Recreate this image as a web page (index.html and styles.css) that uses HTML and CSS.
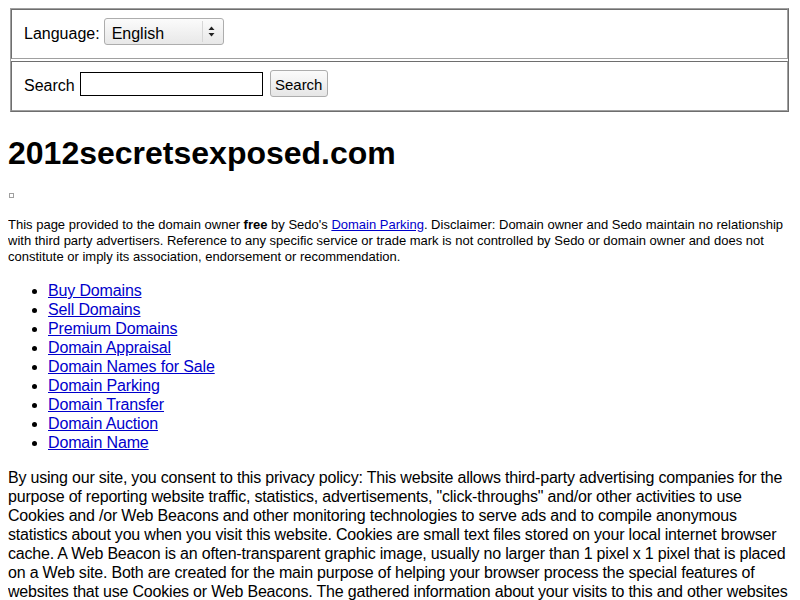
FILE: index.html
```html
<!DOCTYPE html>
<html>
<head>
    <link rel="stylesheet" href="styles.css">
</head>
<body>
    <div class="bar">
        <div class="bar-row">
            <label for="lang" class="lang-label">Language:</label>
            <span class="select-wrap">
                <select id="lang" class="lang-select">
                    <option>English</option>
                </select>
                <svg class="select-arrow" width="7" height="11" viewBox="0 0 7 11">
                    <path d="M3.5 0.5 L6.5 4 L0.5 4 Z" fill="#222"/>
                    <path d="M3.5 10.5 L6.5 7 L0.5 7 Z" fill="#222"/>
                </svg>
            </span>
        </div>
        <div class="bar-row">
            <label for="q" class="search-label">Search</label>
            <input type="text" id="q" class="search-input">
            <button class="search-btn">Search</button>
        </div>
    </div>

    <h1>2012secretsexposed.com</h1>

    <span class="pixel"></span>

    <p class="disclaimer">This page provided to the domain owner <b>free</b> by Sedo's <a href="#">Domain Parking</a>. Disclaimer: Domain owner and Sedo maintain no relationship with third party advertisers. Reference to any specific service or trade mark is not controlled by Sedo or domain owner and does not constitute or imply its association, endorsement or recommendation.</p>

    <ul class="links">
        <li><a href="#">Buy Domains</a></li>
        <li><a href="#">Sell Domains</a></li>
        <li><a href="#">Premium Domains</a></li>
        <li><a href="#">Domain Appraisal</a></li>
        <li><a href="#">Domain Names for Sale</a></li>
        <li><a href="#">Domain Parking</a></li>
        <li><a href="#">Domain Transfer</a></li>
        <li><a href="#">Domain Auction</a></li>
        <li><a href="#">Domain Name</a></li>
    </ul>

    <p class="privacy">By using our site, you consent to this privacy policy: This website allows third-party advertising companies for the purpose of reporting website traffic, statistics, advertisements, "click-throughs" and/or other activities to use Cookies and /or Web Beacons and other monitoring technologies to serve ads and to compile anonymous statistics about you when you visit this website. Cookies are small text files stored on your local internet browser cache. A Web Beacon is an often-transparent graphic image, usually no larger than 1 pixel x 1 pixel that is placed on a Web site. Both are created for the main purpose of helping your browser process the special features of websites that use Cookies or Web Beacons. The gathered information about your visits to this and other websites are used by these third party companies in order to provide advertisements about goods and services believed to be of interest to you.</p>
</body>
</html>
```

FILE: styles.css
```css
html {
    overflow: hidden;
}

body {
    margin: 8px;
    font-family: 'Liberation Sans', Arial, sans-serif;
    font-size: 16px;
    color: #000;
    background: #fff;
}

a {
    color: #0000cc;
}

/* top search bar, drawn like an old bordered table */
.bar {
    margin: 0 3px 0 2px;
    border: 1px solid;
    border-color: #a0a0a0 #6e6e6e #6e6e6e #a0a0a0;
    display: flex;
    flex-direction: column;
    gap: 2px;
}

.bar-row {
    border: 1px solid;
    border-color: #6e6e6e #a0a0a0 #a0a0a0 #6e6e6e;
    padding: 8px 11px 13px 12px;
    display: flex;
    align-items: center;
}

.bar-row label {
    margin-top: 4px;
}

.lang-label {
    margin-right: 4px;
}

.search-label {
    margin-right: 5px;
}

.select-wrap {
    position: relative;
    display: inline-block;
    height: 27px;
}

.lang-select {
    appearance: none;
    -webkit-appearance: none;
    box-sizing: border-box;
    width: 120px;
    height: 27px;
    margin: 0;
    padding: 3px 0 0 7px;
    font-family: 'Liberation Sans', Arial, sans-serif;
    font-size: 16px;
    color: #000;
    border: 1px solid #adadad;
    border-radius: 3px;
    background: linear-gradient(#fbfbfb, #e8e8e8);
}

.select-arrow {
    position: absolute;
    right: 9px;
    top: 8px;
    pointer-events: none;
}

.select-wrap::before {
    content: "";
    position: absolute;
    right: 21px;
    top: 3px;
    bottom: 3px;
    border-left: 1px solid #d6d6d6;
    pointer-events: none;
}

.search-input {
    box-sizing: border-box;
    width: 183px;
    height: 24px;
    margin: 1px 7px 0 0;
    border: 1px solid #000;
    padding: 1px 2px;
    font-size: 14px;
}

.search-btn {
    box-sizing: border-box;
    width: 58px;
    height: 27px;
    padding: 2px 0 0;
    font-family: 'Liberation Sans', Arial, sans-serif;
    font-size: 15px;
    color: #000;
    border: 1px solid #adadad;
    border-radius: 3px;
    background: linear-gradient(#fbfbfb, #e6e6e6);
}

h1 {
    font-size: 32px;
    margin: 23px 0 0;
}

.pixel {
    display: block;
    width: 3px;
    height: 3px;
    margin: 21px 0 0 1px;
    border: 1px solid #a0a0a0;
}

.disclaimer {
    font-size: 13px;
    line-height: 16px;
    margin: 19px 0 0;
}

.links {
    margin: 16px 0;
    padding-left: 40px;
    line-height: 19px;
    letter-spacing: -0.15px;
}

.privacy {
    margin: 0;
    line-height: 19px;
    letter-spacing: -0.2px;
}
```
